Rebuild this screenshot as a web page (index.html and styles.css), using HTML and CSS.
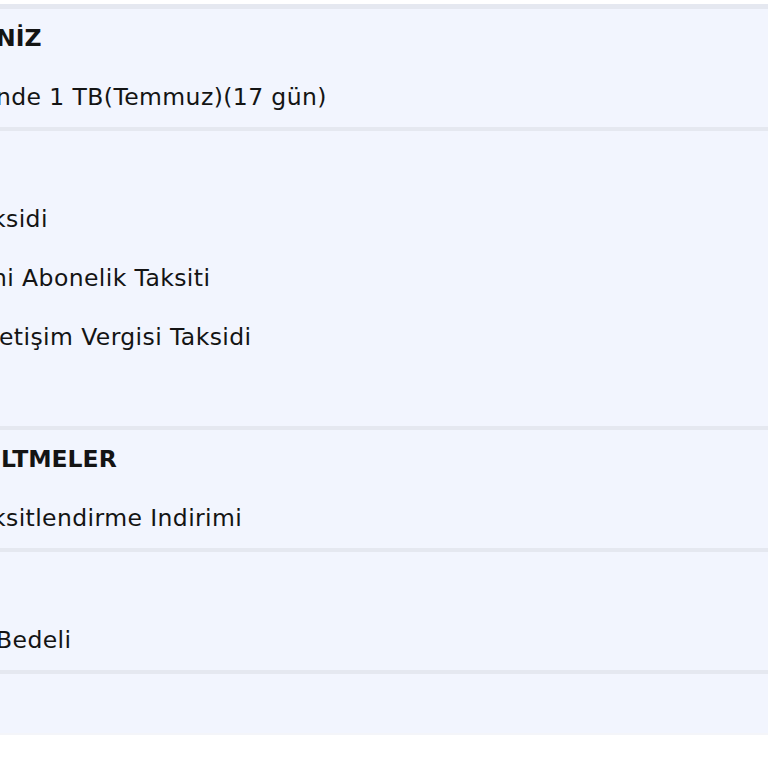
FILE: index.html
```html
<!DOCTYPE html>
<html lang="tr">
  <head>
    <meta charset="UTF-8" />
    <meta name="viewport" content="width=device-width, initial-scale=1.0" />
    <title>Fatura Detayı</title>
    <link rel="stylesheet" href="styles.css">
  </head>
  <body>
    <div class="bill">
      <div class="bill-section">
        <div class="row row-title"><span class="cut-4">NİZ</span></div>
        <div class="row"><span class="cut-4">nde 1 TB(Temmuz)(17 gün)</span></div>
      </div>

      <div class="bill-section">
        <div class="row"></div>
        <div class="row"><span class="cut-8">ksidi</span></div>
        <div class="row"><span class="cut-8">ni Abonelik Taksiti</span></div>
        <div class="row"><span class="cut-1">etişim Vergisi Taksidi</span></div>
        <div class="row"></div>
      </div>

      <div class="bill-section">
        <div class="row row-title"><span class="cut-15">ELTMELER</span></div>
        <div class="row"><span class="cut-8">ksitlendirme Indirimi</span></div>
      </div>

      <div class="bill-section">
        <div class="row"></div>
        <div class="row"><span class="cut-4">Bedeli</span></div>
      </div>

      <div class="bill-section bill-end">
        <div class="row"></div>
      </div>
    </div>
  </body>
</html>
```

FILE: styles.css
```css
body {
  margin: 0;
  background-color: #ffffff;
  font-family: "DejaVu Sans", Verdana, sans-serif;
  color: #141414;
  overflow: hidden;
}

.bill {
  margin-top: 4px;
  padding-top: 5px;
  background-color: #e5e8f0;
  display: flex;
  flex-direction: column;
  gap: 4px;
}

.bill-section {
  background-color: #f2f5fe;
}

.bill-end {
  border-bottom: 2px solid #f4f5f9;
}

.row {
  height: 59px;
  line-height: 59px;
  font-size: 23.5px;
  letter-spacing: 0.4px;
  white-space: nowrap;
  overflow: hidden;
}

.row span {
  display: inline-block;
}

.row-title {
  font-weight: bold;
  letter-spacing: 0;
}

/* text that starts left of the visible area */
.cut-1 {
  margin-left: -1px;
}

.cut-4 {
  margin-left: -4px;
}

.cut-8 {
  margin-left: -8px;
}

.cut-15 {
  margin-left: -15px;
}
```
